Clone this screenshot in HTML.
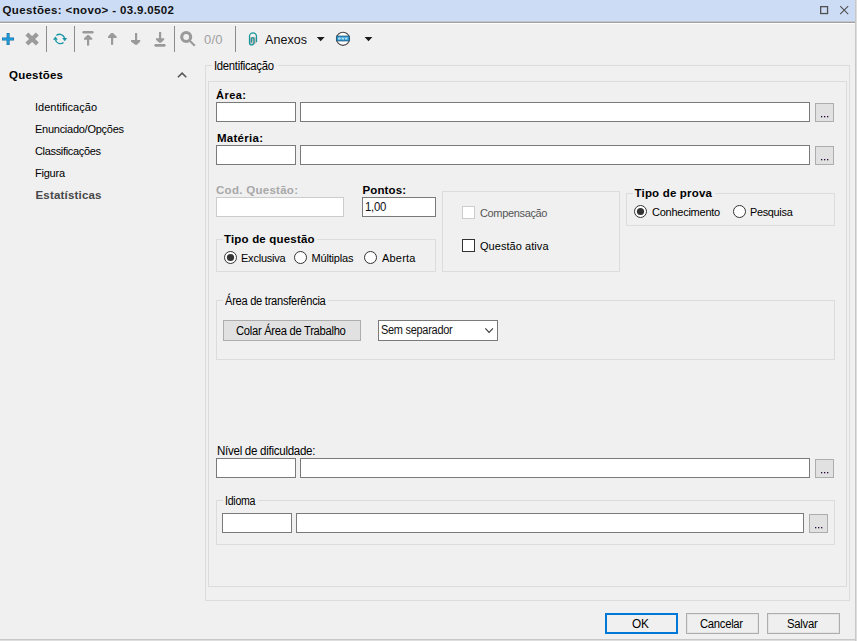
<!DOCTYPE html>
<html><head><meta charset="utf-8"><style>
html,body{margin:0;padding:0;}
body{width:857px;height:641px;overflow:hidden;background:#f0f0f0;position:relative;font-family:"Liberation Sans",sans-serif;}
.a{position:absolute;box-sizing:border-box;}
.t{position:absolute;white-space:nowrap;line-height:20px;height:20px;font-family:"Liberation Sans",sans-serif;}
.inp{position:absolute;box-sizing:border-box;background:#fff;border:1px solid #7a7a7a;}
.btn{position:absolute;box-sizing:border-box;background:#e1e1e1;border:1px solid #adadad;}
.grp{position:absolute;box-sizing:border-box;border:1px solid #dcdcdc;}
.dots{position:absolute;height:1px;width:1px;background:#3a0a3a;}
</style></head><body>
<!-- title bar -->
<div class="a" style="left:0;top:0;width:855px;height:21px;background:#cddcf5"></div>
<div class="a" style="left:0;top:21px;width:855px;height:1px;background:#c3c6cc"></div>
<div class="a" style="left:0;top:22px;width:855px;height:1px;background:#a0a0a0"></div>
<div class="a" style="left:0;top:23px;width:855px;height:1px;background:#ffffff"></div>
<div class="a" style="left:855px;top:0;width:1px;height:641px;background:#c8c8c8"></div>
<div class="a" style="left:856px;top:0;width:1px;height:641px;background:#dedede"></div>
<div class="a" style="left:0;top:639px;width:855px;height:1px;background:#c8c8c8"></div>
<div class="a" style="left:0;top:640px;width:855px;height:1px;background:#dedede"></div>

<svg class="a" style="left:0;top:0" width="857" height="641" viewBox="0 0 857 641">
  <!-- window buttons -->
  <rect x="820.65" y="6.65" width="6.9" height="6.9" fill="none" stroke="#505050" stroke-width="1.3"/>
  <path d="M840.2,6.2 L848.2,14.2 M848.2,6.2 L840.2,14.2" stroke="#505050" stroke-width="1.1" fill="none"/>
  <!-- toolbar separators -->
  <g fill="#8c8c8c">
    <rect x="46" y="26" width="1" height="26"/>
    <rect x="74" y="26" width="1" height="26"/>
    <rect x="174" y="26" width="1" height="26"/>
    <rect x="235" y="26" width="1" height="26"/>
  </g>
  <!-- plus -->
  <path d="M2,39 H14 M8.1,33 V45" stroke="#1a6e9e" stroke-width="3.0"/>
  <path d="M2.6,39 H13.4 M8.1,33.6 V44.4" stroke="#1d97d5" stroke-width="2.0"/>
  <!-- X -->
  <path d="M28.4,35.4 L35.8,42.6 M35.8,35.4 L28.4,42.6" stroke="#9b9b9b" stroke-width="4.2" stroke-linecap="square"/>
  <!-- refresh -->
  <g stroke="#1896a4" stroke-width="1.35" fill="none">
    <path d="M56.4,35.6 A5,5 0 0 1 64.6,38.2"/>
    <path d="M63.6,42.4 A5,5 0 0 1 55.4,39.6"/>
  </g>
  <g fill="#1896a4">
    <path d="M62.2,38 L67.2,38 L64.7,41.2 Z"/>
    <path d="M52.9,39.8 L57.9,39.8 L55.4,36.6 Z"/>
  </g>
  <!-- arrows -->
  <g fill="#9a9a9a">
    <path d="M82,32.2 L83.2,31 L92.8,31 L94,32.2 L92.8,33.6 L83.2,33.6 Z"/>
    <rect x="87" y="38" width="2.2" height="7.6"/>
    <path d="M84,38.2 L87.4,35 L88.8,35 L92.2,38.2 L92.2,39.8 L84,39.8 Z"/>
    <rect x="111" y="36" width="2.2" height="8.8"/>
    <path d="M108,36.4 L111.2,33 L113,33 L116.6,36.4 L116.6,38 L108,38 Z"/>
    <rect x="135" y="33" width="2.2" height="8"/>
    <path d="M131,40 L140.2,40 L140.2,41.4 L137,44.8 L135.2,44.8 L131,41.4 Z"/>
    <rect x="159" y="32" width="2.2" height="7"/>
    <path d="M156,38.2 L164.2,38.2 L164.2,39.8 L161,42.8 L159.2,42.8 L156,39.8 Z"/>
    <path d="M154,45.3 L155.2,44 L164.8,44 L166,45.3 L164.8,46.7 L155.2,46.7 Z"/>
  </g>
  <!-- magnifier -->
  <circle cx="186.2" cy="37" r="4.5" fill="none" stroke="#9a9a9a" stroke-width="3.1"/>
  <path d="M190,41 L194.8,45.8" stroke="#9a9a9a" stroke-width="2.1"/>
  <!-- paperclip -->
  <rect x="250.2" y="37.2" width="5.6" height="6.5" fill="#c4b8b8"/>
  <path d="M256.5,42.3 V36.3 A3.5,3.5 0 0 0 249.5,36.3 V42.7 A2.25,2.25 0 0 0 254,42.7 V39 A1.3,1.3 0 0 0 251.4,39 V42.5" fill="none" stroke="#18969a" stroke-width="1.25"/>
  <!-- dropdown triangles -->
  <path d="M316.8,37 L324.6,37 L320.7,41.2 Z" fill="#1a1a1a"/>
  <path d="M364.6,37 L372.4,37 L368.5,41.2 Z" fill="#1a1a1a"/>
  <!-- www globe -->
  <circle cx="343" cy="38.8" r="6.6" fill="#fff" stroke="#454545" stroke-width="1.1"/>
  <rect x="336.4" y="36" width="13.2" height="5" fill="#1e94d0" stroke="#35506a" stroke-width="0.7"/>
  <path d="M338.2,37.5 l0.6,2 l0.6,-2 l0.6,2 l0.6,-2 M341.6,37.5 l0.6,2 l0.6,-2 l0.6,2 l0.6,-2 M345,37.5 l0.6,2 l0.6,-2 l0.6,2 l0.6,-2" stroke="#fff" stroke-width="0.55" fill="none"/>
  <!-- left chevron -->
  <path d="M177.9,77.3 L182.1,73.1 L186.3,77.3" fill="none" stroke="#555" stroke-width="1.5"/>
</svg>

<!-- main group box -->
<div class="grp" style="left:205px;top:65px;width:645px;height:536px"></div>
<div class="a" style="left:212px;top:64px;width:66px;height:3px;background:#f0f0f0"></div>
<!-- inner panel -->
<div class="grp" style="left:208px;top:81px;width:639px;height:506px"></div>

<!-- Área -->
<div class="inp" style="left:216px;top:102px;width:80px;height:20px"></div>
<div class="inp" style="left:300px;top:102px;width:510px;height:20px"></div>
<div class="btn" style="left:815px;top:103px;width:19px;height:19px"></div>
<!-- Matéria -->
<div class="inp" style="left:216px;top:145px;width:80px;height:20px"></div>
<div class="inp" style="left:300px;top:145px;width:510px;height:20px"></div>
<div class="btn" style="left:815px;top:146px;width:19px;height:19px"></div>
<!-- Cod questao -->
<div class="inp" style="left:216px;top:197px;width:128px;height:20px;border-color:#cccccc"></div>
<!-- Pontos -->
<div class="inp" style="left:362px;top:197px;width:74px;height:20px"></div>

<!-- Tipo de questao group -->
<div class="grp" style="left:216px;top:239px;width:220px;height:33px"></div>
<div class="a" style="left:223px;top:237px;width:94px;height:4px;background:#f0f0f0"></div>
<!-- radios -->
<svg class="a" style="left:0;top:0" width="857" height="641" viewBox="0 0 857 641">
  <g fill="#fff" stroke="#333" stroke-width="1">
    <circle cx="230.5" cy="257.5" r="6"/>
    <circle cx="300.5" cy="257.5" r="6"/>
    <circle cx="370.5" cy="257.5" r="6"/>
    <circle cx="640.5" cy="211.5" r="6"/>
    <circle cx="739.5" cy="211.5" r="6"/>
  </g>
  <circle cx="230.5" cy="257.5" r="3.6" fill="#333"/>
  <circle cx="640.5" cy="211.5" r="3.6" fill="#333"/>
</svg>

<!-- Compensacao group -->
<div class="grp" style="left:442px;top:191px;width:178px;height:81px"></div>
<div class="a" style="left:462px;top:206px;width:13px;height:13px;background:#fff;border:1px solid #cccccc;box-sizing:border-box"></div>
<div class="a" style="left:462px;top:239px;width:13px;height:13px;background:#fff;border:1px solid #333;box-sizing:border-box"></div>

<!-- Tipo de prova group -->
<div class="grp" style="left:626px;top:193px;width:209px;height:33px"></div>
<div class="a" style="left:633px;top:191px;width:82px;height:4px;background:#f0f0f0"></div>

<!-- Area de transferencia group -->
<div class="grp" style="left:216px;top:300px;width:619px;height:60px"></div>
<div class="a" style="left:223px;top:298px;width:105px;height:4px;background:#f0f0f0"></div>
<div class="btn" style="left:223px;top:320px;width:138px;height:21px"></div>
<div class="inp" style="left:378px;top:320px;width:120px;height:21px"></div>

<!-- Nivel -->
<div class="inp" style="left:216px;top:458px;width:80px;height:20px"></div>
<div class="inp" style="left:300px;top:458px;width:510px;height:20px"></div>
<div class="btn" style="left:815px;top:459px;width:19px;height:19px"></div>

<!-- Idioma group -->
<div class="grp" style="left:216px;top:500px;width:619px;height:45px"></div>
<div class="a" style="left:223px;top:498px;width:35px;height:4px;background:#f0f0f0"></div>
<div class="inp" style="left:222px;top:513px;width:70px;height:20px"></div>
<div class="inp" style="left:296px;top:513px;width:508px;height:20px"></div>
<div class="btn" style="left:809px;top:514px;width:19px;height:19px"></div>

<!-- dots in ... buttons -->
<svg class="a" style="left:0;top:0" width="857" height="641" viewBox="0 0 857 641">
  <g fill="#2a0a3a">
    <rect x="821" y="116" width="1.3" height="1.3"/><rect x="824" y="116" width="1.3" height="1.3"/><rect x="827" y="116" width="1.3" height="1.3"/>
    <rect x="821" y="159" width="1.3" height="1.3"/><rect x="824" y="159" width="1.3" height="1.3"/><rect x="827" y="159" width="1.3" height="1.3"/>
    <rect x="821" y="472" width="1.3" height="1.3"/><rect x="824" y="472" width="1.3" height="1.3"/><rect x="827" y="472" width="1.3" height="1.3"/>
    <rect x="815" y="527" width="1.3" height="1.3"/><rect x="818" y="527" width="1.3" height="1.3"/><rect x="821" y="527" width="1.3" height="1.3"/>
  </g>
</svg>

<svg class="a" style="left:0;top:0" width="857" height="641" viewBox="0 0 857 641">
  <!-- select chevron -->
  <path d="M485.3,328.4 L489.1,332.4 L492.9,328.4" fill="none" stroke="#3a3a3a" stroke-width="1.1"/>
</svg>
<!-- bottom buttons -->
<div class="a" style="left:605px;top:613px;width:73px;height:21px;border:2px solid #0078d7;background:#f0f0f0"></div>
<div class="a" style="left:686px;top:613px;width:73px;height:21px;border:1px solid #adadad;background:#efefef;box-shadow:inset 0 0 0 1px #e4e4e4"></div>
<div class="a" style="left:767px;top:613px;width:73px;height:21px;border:1px solid #adadad;background:#efefef;box-shadow:inset 0 0 0 1px #e4e4e4"></div>

<div class="t" style="left:2.50px;top:0px;font-size:11.5px;font-weight:bold;color:#111;letter-spacing:0.362px">Questões: &lt;novo&gt; - 03.9.0502</div><div class="t" style="left:204.00px;top:30px;font-size:13px;font-weight:normal;color:#a0a0a0;letter-spacing:0.211px">0/0</div><div class="t" style="left:265.00px;top:30px;font-size:12.5px;font-weight:normal;color:#111;letter-spacing:0.059px">Anexos</div><div class="t" style="left:9.00px;top:65px;font-size:11.5px;font-weight:bold;color:#000;letter-spacing:0.225px">Questões</div><div class="t" style="left:35.00px;top:97px;font-size:11px;font-weight:normal;color:#000;letter-spacing:0.020px">Identificação</div><div class="t" style="left:35.00px;top:119px;font-size:11px;font-weight:normal;color:#000;letter-spacing:-0.264px">Enunciado/Opções</div><div class="t" style="left:35.00px;top:141px;font-size:11px;font-weight:normal;color:#000;letter-spacing:-0.332px">Classificações</div><div class="t" style="left:35.00px;top:163px;font-size:11px;font-weight:normal;color:#000;letter-spacing:-0.237px">Figura</div><div class="t" style="left:35.50px;top:185px;font-size:11.5px;font-weight:bold;color:#474747;letter-spacing:0.188px">Estatísticas</div><div class="t" style="left:214.00px;top:56px;font-size:12px;font-weight:normal;color:#000;letter-spacing:-0.3px;transform:scaleX(0.9406);transform-origin:0 0">Identificação</div><div class="t" style="left:216.00px;top:85px;font-size:11px;font-weight:bold;color:#000;letter-spacing:0.469px">Área:</div><div class="t" style="left:217.00px;top:128px;font-size:11.5px;font-weight:bold;color:#000;letter-spacing:0.270px">Matéria:</div><div class="t" style="left:216.00px;top:180px;font-size:11.5px;font-weight:bold;color:#a8a8a8;letter-spacing:0.284px">Cod. Questão:</div><div class="t" style="left:362.50px;top:180px;font-size:11.5px;font-weight:bold;color:#000;letter-spacing:0.115px">Pontos:</div><div class="t" style="left:365.00px;top:197px;font-size:12px;font-weight:normal;color:#111;letter-spacing:-0.3px;transform:scaleX(0.9484);transform-origin:0 0">1,00</div><div class="t" style="left:224.00px;top:229px;font-size:11.5px;font-weight:bold;color:#000;letter-spacing:0.181px">Tipo de questão</div><div class="t" style="left:241.00px;top:248px;font-size:11px;font-weight:normal;color:#000;letter-spacing:-0.221px">Exclusiva</div><div class="t" style="left:311.50px;top:248px;font-size:11px;font-weight:normal;color:#000;letter-spacing:-0.176px">Múltiplas</div><div class="t" style="left:382.00px;top:248px;font-size:11px;font-weight:normal;color:#000;letter-spacing:0.196px">Aberta</div><div class="t" style="left:480.00px;top:203px;font-size:11px;font-weight:normal;color:#555;letter-spacing:-0.344px">Compensação</div><div class="t" style="left:480.00px;top:236px;font-size:11px;font-weight:normal;color:#000;letter-spacing:0.052px">Questão ativa</div><div class="t" style="left:634.50px;top:183px;font-size:11.5px;font-weight:bold;color:#000;letter-spacing:0.183px">Tipo de prova</div><div class="t" style="left:652.00px;top:202px;font-size:11px;font-weight:normal;color:#000;letter-spacing:-0.249px">Conhecimento</div><div class="t" style="left:750.30px;top:202px;font-size:11px;font-weight:normal;color:#000;letter-spacing:-0.3px;transform:scaleX(0.9892);transform-origin:0 0">Pesquisa</div><div class="t" style="left:224.50px;top:291px;font-size:12px;font-weight:normal;color:#000;letter-spacing:-0.3px;transform:scaleX(0.9270);transform-origin:0 0">Área de transferência</div><div class="t" style="left:235.50px;top:321px;font-size:12px;font-weight:normal;color:#000;letter-spacing:-0.3px;transform:scaleX(0.9323);transform-origin:0 0">Colar Área de Trabalho</div><div class="t" style="left:380.50px;top:320px;font-size:12px;font-weight:normal;color:#111;letter-spacing:-0.3px;transform:scaleX(0.9140);transform-origin:0 0">Sem separador</div><div class="t" style="left:216.50px;top:441px;font-size:12px;font-weight:normal;color:#000;letter-spacing:-0.3px;transform:scaleX(0.9649);transform-origin:0 0">Nível de dificuldade:</div><div class="t" style="left:224.50px;top:491px;font-size:12px;font-weight:normal;color:#000;letter-spacing:-0.3px;transform:scaleX(0.8833);transform-origin:0 0">Idioma</div><div class="t" style="left:631.50px;top:614px;font-size:12px;font-weight:normal;color:#000;letter-spacing:-0.3px;transform:scaleX(0.9857);transform-origin:0 0">OK</div><div class="t" style="left:699.70px;top:614px;font-size:12px;font-weight:normal;color:#000;letter-spacing:-0.3px;transform:scaleX(0.9384);transform-origin:0 0">Cancelar</div><div class="t" style="left:787.00px;top:614px;font-size:12px;font-weight:normal;color:#000;letter-spacing:-0.3px;transform:scaleX(0.9442);transform-origin:0 0">Salvar</div>
</body></html>
